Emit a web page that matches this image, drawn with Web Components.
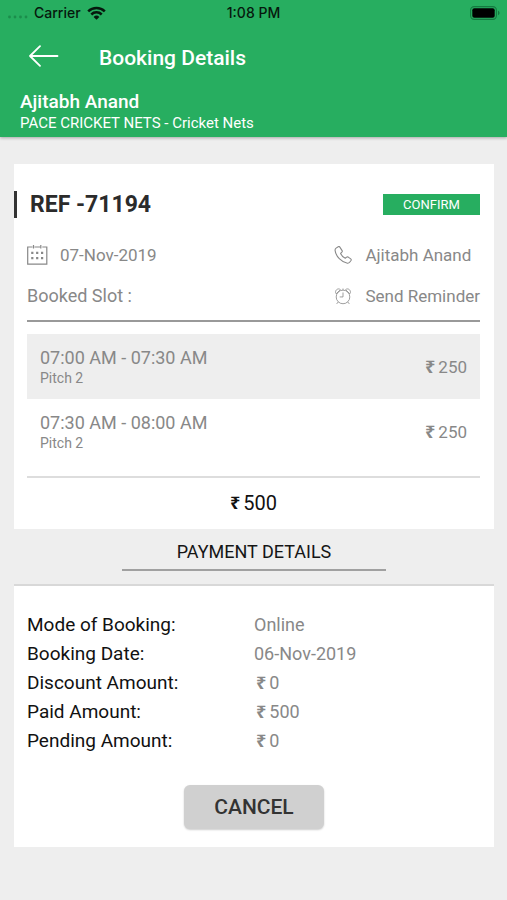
<!DOCTYPE html>
<html lang="en">
<head>
<meta charset="utf-8">
<meta name="viewport" content="width=device-width, initial-scale=1">
<title>Booking Details</title>
<style>
  html { background: #eeeeee; }
  body { margin: 0; font-family: Roboto, "Noto Sans", sans-serif; color: #111; }
</style>
</head>
<body>
<booking-page></booking-page>
<script>
const define = (name, html) => {
  const template = document.createElement('template');
  template.innerHTML = html;
  customElements.define(name, class extends HTMLElement {
    constructor() {
      super();
      this.attachShadow({ mode: 'open' }).append(template.content.cloneNode(true));
    }
  });
};

define('status-bar', `
<style>
  :host { display: grid; grid-template-columns: 1fr auto 1fr; align-items: center; height: 26px; padding: 0 7px; font: 500 14px/26px Inter, sans-serif; color: #06180d; }
  .left { display: flex; align-items: center; gap: 6px; }
  .battery { justify-self: end; }
  svg { display: block; }
</style>
<div class="left">
  <svg width="21" height="18" viewBox="0 0 21 18" fill="#1b8d4b"><circle cx="2.5" cy="13" r="1.4"/><circle cx="8" cy="13" r="1.4"/><circle cx="13.5" cy="13" r="1.4"/><circle cx="19" cy="13" r="1.4"/></svg>
  <span>Carrier</span>
  <svg width="19" height="14" viewBox="0 0 19 14" fill="none" stroke="#06180d" stroke-width="2.5"><path d="M1.2 5.3a11.8 11.8 0 0 1 16.6 0"/><path d="M4.3 8.5a7.4 7.4 0 0 1 10.4 0"/><path d="M9.5 13.8 6.6 10.9a4.1 4.1 0 0 1 5.8 0z" fill="#06180d" stroke="none"/></svg>
</div>
<span>1:08 PM</span>
<svg class="battery" width="30" height="14" viewBox="0 0 30 14"><rect x=".6" y=".6" width="25.8" height="12.8" rx="3.6" fill="none" stroke="#147a40" stroke-width="1.1"/><rect x="2.3" y="2.3" width="22.4" height="9.4" rx="2" fill="#000"/><path d="M28 4.8c2 .7 2 3.7 0 4.4z" fill="#147a40"/></svg>
`);

define('app-header', `
<style>
  :host { display: block; background: #27ae60; color: #fff; padding-bottom: 4px; box-shadow: 0 1px 3px rgba(0,0,0,.3); }
  .bar { display: flex; align-items: center; height: 63px; padding-left: 28px; gap: 40px; }
  button { display: block; padding: 0; border: 0; background: none; color: inherit; cursor: pointer; margin-bottom: 3px; }
  svg { display: block; }
  h1 { margin: 0; font-size: 21px; font-weight: 500; line-height: 24px; }
  .who { padding: 2px 20px 0; }
  .name { font-size: 19px; font-weight: 500; line-height: 22px; }
  .place { font-size: 15px; line-height: 20px; }
</style>
<status-bar></status-bar>
<div class="bar">
  <button type="button" aria-label="Back"><svg width="31" height="22" viewBox="0 0 31 22" fill="none" stroke="#fff" stroke-width="1.8" stroke-linecap="round" stroke-linejoin="round"><path d="M29.5 11H2M12 1.2 2 11l10 9.8"/></svg></button>
  <h1><slot name="title"></slot></h1>
</div>
<div class="who"><div class="name"><slot name="name"></slot></div><div class="place"><slot name="place"></slot></div></div>
`);

define('rupee-amount', `
<style>
  :host { display: inline-flex; align-items: flex-start; gap: 3px; }
  .sign { font: 700 18px/22px "Noto Sans", sans-serif; }
</style>
<span class="sign">₹</span><span><slot></slot></span>
`);

define('slot-row', `
<style>
  :host { display: flex; justify-content: space-between; align-items: center; padding: 12px 13px; color: #888; }
  :host([shaded]) { background: #eeeeee; }
  .time { font-size: 18px; line-height: 24px; }
  .pitch { font-size: 14px; line-height: 17px; }
  .cost { font-size: 17px; line-height: 24px; }
</style>
<div><div class="time"><slot name="time"></slot></div><div class="pitch"><slot name="pitch"></slot></div></div>
<rupee-amount class="cost"><slot></slot></rupee-amount>
`);

define('booking-card', `
<style>
  :host { display: block; background: #fff; padding: 27px 14px 14px 0; }
  .ref { display: flex; justify-content: space-between; align-items: center; border-left: 3px solid #333; padding-left: 13px; height: 27px; }
  h2 { margin: 0; font-size: 23px; font-weight: 700; line-height: 27px; color: #2b2b2b; }
  .ref button { width: 97px; height: 21px; padding: 0; border: 0; background: #27ae60; color: #fff; font: 13px/21px Roboto, sans-serif; }
  .body { padding-left: 13px; }
  .info { display: grid; grid-template-columns: 1fr auto; row-gap: 17px; padding: 25px 0 12px; font-size: 17px; line-height: 24px; color: #888; }
  .item { display: flex; align-items: center; gap: 12px; }
  .item button { padding: 0; border: 0; background: none; font: inherit; color: inherit; }
  .caption { font-size: 18px; }
  svg { display: block; fill: none; stroke: #888; }
  .slots { border-top: 2px solid #999; padding: 12px 0; }
  .total { border-top: 2px solid #ddd; padding-top: 13px; font-size: 20px; line-height: 24px; color: #111; }
  .total rupee-amount { display: flex; justify-content: center; }
</style>
<div class="ref"><h2><slot name="ref"></slot></h2><button type="button">CONFIRM</button></div>
<div class="body">
  <div class="info">
    <div class="item"><svg width="21" height="20" viewBox="0 0 21 20"><path d="M5.5 2H.7v17.2h19.1V2h-4.5M7.5 2h5.6M6.5 0v3.6M13.8 0v3.6" stroke-width="1.2"/><path d="M4.2 7.9h2.2m2.7 0h2.2m2.7 0h2.2M4.2 13.2h2.2m2.7 0h2.2m2.7 0h2.2" stroke-width="2.2"/></svg><span>07-Nov-2019</span></div>
    <div class="item"><svg width="20" height="18" viewBox="-1 0 21 20" stroke-width="1.2" stroke-linejoin="round"><path d="M1.8 2.4 4.2.8c.7-.4 1.4-.2 1.8.4l2.5 3.9c.4.6.2 1.3-.3 1.8L6.8 8.1c1 2.6 2.8 4.4 5.2 5.5l1.5-1.2c.6-.4 1.2-.5 1.8-.1l2.8 2c.6.5.7 1.2.3 1.8l-1.5 2c-.6.8-1.5 1.1-2.5 1C7.9 18.1 1.4 11.5.7 4.8c-.1-1 .3-1.8 1.1-2.4z"/></svg><button type="button">Ajitabh Anand</button></div>
    <div class="item caption"><span>Booked Slot :</span></div>
    <div class="item"><svg width="20" height="17" viewBox="-1 0 21 19" stroke-width=".9"><circle cx="9.5" cy="10" r="7.6"/><path d="M9.5 5v5H5.8M9.5 .6v1.8M4.2 15.6l-1.8 2.2M14.8 15.6l1.8 2.2M1.9 6.5C-.6 3.4 3.8-.9 6.6 1.9zM17.1 6.5c2.5-3.1-1.9-7.4-4.7-4.6z"/></svg><button type="button">Send Reminder</button></div>
  </div>
  <div class="slots"><slot></slot></div>
  <div class="total"><rupee-amount><slot name="total"></slot></rupee-amount></div>
</div>
`);

define('section-title', `
<style>
  :host { display: block; padding: 12px 0 13px; }
  h2 { margin: 0 auto; width: 55%; border-bottom: 2px solid #a0a0a0; padding-bottom: 6px; text-align: center; font-size: 18px; font-weight: 400; line-height: 22px; color: #151515; }
</style>
<h2><slot></slot></h2>
`);

define('payment-row', `
<style>
  :host { display: grid; grid-template-columns: 227px 1fr; align-items: center; height: 29px; font-size: 19px; line-height: 24px; color: #111; }
  .value { display: flex; font-size: 18px; color: #888; }
</style>
<span><slot name="label"></slot></span><span class="value"><slot></slot></span>
`);

define('payment-card', `
<style>
  :host { display: block; background: #fff; border-top: 2px solid #d8d8d8; padding: 24px 13px 18px; }
  button { display: block; margin: 30px auto 0; width: 140px; height: 44px; border: 0; border-radius: 6px; background: #d0d0d0; box-shadow: 0 1px 2px rgba(0,0,0,.2); color: #333; font: 500 21px/44px Roboto, sans-serif; padding: 0; }
</style>
<slot></slot>
<button type="button">CANCEL</button>
`);

define('booking-page', `
<style>
  :host { display: block; }
  main { padding: 27px 13px 52px 14px; }
  payment-row rupee-amount { padding-left: 2px; }
</style>
<app-header><span slot="title">Booking Details</span><span slot="name">Ajitabh Anand</span><span slot="place">PACE CRICKET NETS - Cricket Nets</span></app-header>
<main>
  <booking-card>
    <span slot="ref">REF -71194</span>
    <slot-row shaded><span slot="time">07:00 AM - 07:30 AM</span><span slot="pitch">Pitch 2</span>250</slot-row>
    <slot-row><span slot="time">07:30 AM - 08:00 AM</span><span slot="pitch">Pitch 2</span>250</slot-row>
    <span slot="total">500</span>
  </booking-card>
  <section-title>PAYMENT DETAILS</section-title>
  <payment-card>
    <payment-row><span slot="label">Mode of Booking:</span>Online</payment-row>
    <payment-row><span slot="label">Booking Date:</span>06-Nov-2019</payment-row>
    <payment-row><span slot="label">Discount Amount:</span><rupee-amount>0</rupee-amount></payment-row>
    <payment-row><span slot="label">Paid Amount:</span><rupee-amount>500</rupee-amount></payment-row>
    <payment-row><span slot="label">Pending Amount:</span><rupee-amount>0</rupee-amount></payment-row>
  </payment-card>
</main>
`);
</script>
</body>
</html>
